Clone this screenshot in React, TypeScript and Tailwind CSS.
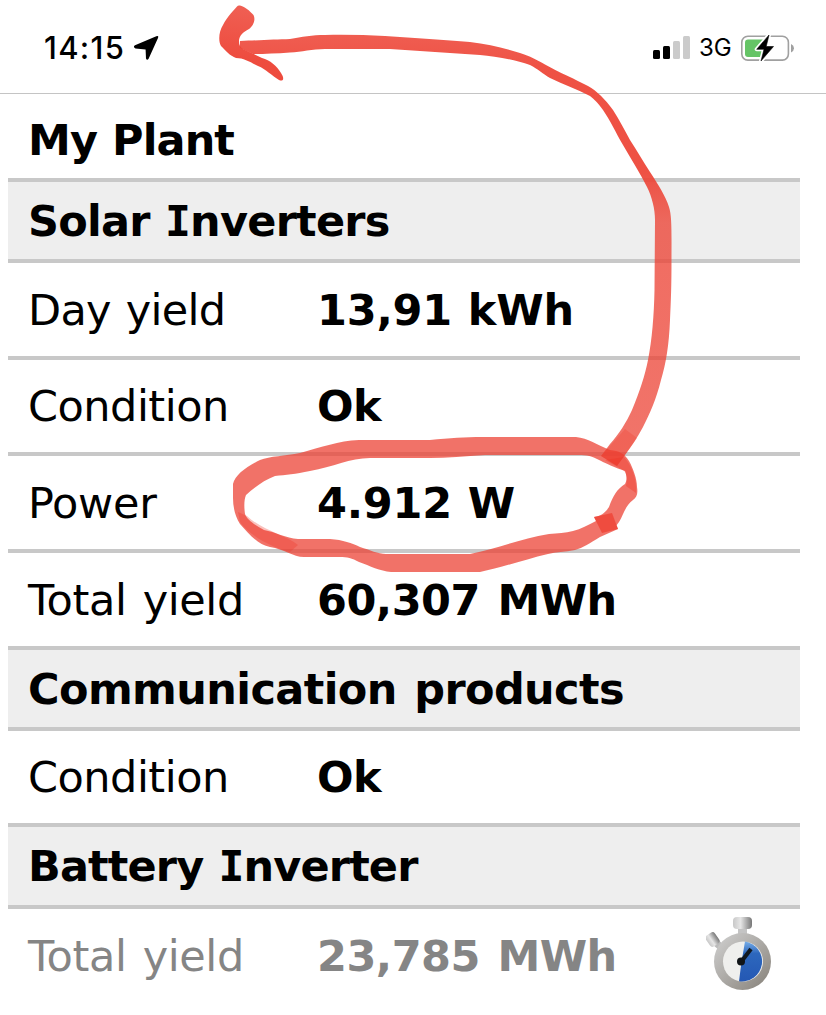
import { Fragment } from 'react';
import { clsx } from 'clsx';

type Row = {
  label: string;
  value?: string;
  heading?: boolean;
  muted?: boolean;
  height: string;
  labelSpacing: string;
  valueSpacing?: string;
};

const rows: Row[] = [
  { label: 'Solar Inverters', heading: true, height: 'h-[81px]', labelSpacing: 'tracking-[-0.75px] [word-spacing:1px]' },
  {
    label: 'Day yield',
    value: '13,91 kWh',
    height: 'h-[97px]',
    labelSpacing: 'tracking-[-0.7px] [word-spacing:2px]',
    valueSpacing: 'tracking-[-0.2px] [word-spacing:1px]',
  },
  { label: 'Condition', value: 'Ok', height: 'h-[96px]', labelSpacing: 'tracking-[-0.5px]', valueSpacing: 'tracking-[-0.5px]' },
  {
    label: 'Power',
    value: '4.912 W',
    height: 'h-[97px]',
    labelSpacing: 'tracking-[-0.3px]',
    valueSpacing: 'tracking-[-0.2px] [word-spacing:1px]',
  },
  {
    label: 'Total yield',
    value: '60,307 MWh',
    height: 'h-[97px]',
    labelSpacing: 'tracking-[-0.4px] [word-spacing:3px]',
    valueSpacing: 'tracking-[-0.5px] [word-spacing:3px]',
  },
  {
    label: 'Communication products',
    heading: true,
    height: 'h-[81px]',
    labelSpacing: 'tracking-[-0.6px] [word-spacing:3px]',
  },
  { label: 'Condition', value: 'Ok', height: 'h-[96px]', labelSpacing: 'tracking-[-0.5px]', valueSpacing: 'tracking-[-0.5px]' },
  { label: 'Battery Inverter', heading: true, height: 'h-[82px]', labelSpacing: 'tracking-[-0.85px] [word-spacing:1px]' },
  {
    label: 'Total yield',
    value: '23,785 MWh',
    muted: true,
    height: 'h-[97px]',
    labelSpacing: 'tracking-[-0.4px] [word-spacing:3px]',
    valueSpacing: 'tracking-[-0.5px] [word-spacing:3px]',
  },
];

// The capital I carries serifs, which only the mono cut has
function Label({ text }: { text: string }) {
  return (
    <>
      {text.split('I').map((part, i) => (
        <Fragment key={i}>
          {i > 0 && <span className="font-['DejaVu_Sans_Mono',monospace]">I</span>}
          {part}
        </Fragment>
      ))}
    </>
  );
}

function StatusBar() {
  return (
    <header className="flex h-[94px] items-start justify-between border-b border-[#c4c4c4] pl-[44px] pr-8 pt-[30px] font-['Inter',sans-serif]">
      <div className="flex items-center">
        <span className="w-[90px] text-[31px] font-medium leading-9 tracking-[1.3px]">14:15</span>
        <svg width="26" height="26" viewBox="0 0 26 26">
          <path d="M1 10.200 22.300 1.200Q25 .3 24 3L14.600 23.800Q13 26 12 23.500L11.600 14.500 1.500 13.500Q-1.500 12 1 10.200Z" />
        </svg>
      </div>
      <div className="flex h-9 items-center">
        <svg width="38" height="24" viewBox="0 0 38 24">
          <rect x="0" y="14" width="7" height="9" rx="1.500" />
          <rect x="10" y="10" width="7" height="13" rx="1.500" />
          <rect x="20" y="5" width="7" height="18" rx="1.500" fill="#cbcbcb" />
          <rect x="30" y="0" width="7" height="23" rx="1.500" fill="#cbcbcb" />
        </svg>
        <span className="ml-2 w-[42px] text-[24px] leading-9">3G</span>
        <svg width="53" height="28" viewBox="0 -1.500 53 28">
          <rect x=".8" y=".8" width="46.600" height="23.800" rx="6" fill="none" stroke="#a0a0a0" strokeWidth="1.600" />
          <path d="M50 8.500Q53 10 53 12.700T50 17Z" fill="#a0a0a0" />
          <path d="M7 4H25V21.500H7Q4 21.500 4 18.500V7Q4 4 7 4Z" fill="#65c466" />
          <path
            d="M28-.5 15.700 13.800H23L20 25.500 32.500 11H25.200Z"
            stroke="#fff"
            strokeWidth="4"
            strokeLinejoin="round"
          />
          <path d="M28-.5 15.700 13.800H23L20 25.500 32.500 11H25.200Z" stroke="#000" strokeWidth=".6" strokeLinejoin="round" />
        </svg>
      </div>
    </header>
  );
}

function Stopwatch() {
  return (
    <svg className="-mt-[3px] ml-auto mr-[28px]" width="66" height="76" viewBox="706 915 66 76">
      <defs>
        <linearGradient id="rim" x1="0" y1="0" x2="1" y2="1">
          <stop offset="0" stopColor="#d2d2d2" />
          <stop offset="1" stopColor="#858078" />
        </linearGradient>
        <linearGradient id="knob" x1="0" y1="0" x2="1" y2="0">
          <stop offset="0" stopColor="#c8c8c8" />
          <stop offset=".4" stopColor="#e6e6e6" />
          <stop offset="1" stopColor="#777" />
        </linearGradient>
        <linearGradient id="dial" x1="0" y1="0" x2="0" y2="1">
          <stop offset="0" stopColor="#77aee8" />
          <stop offset=".3" stopColor="#2d67bd" />
          <stop offset="1" stopColor="#2458b4" />
        </linearGradient>
      </defs>
      <rect x="738" y="926" width="9" height="9" fill="#c4c4c4" />
      <rect x="733" y="916" width="19" height="12" rx="4" fill="url(#knob)" />
      <path d="m714 940 8 7" stroke="#bbb" strokeWidth="7" />
      <rect x="707" y="932" width="11" height="13" rx="3" fill="url(#knob)" transform="rotate(-35 712.500 938.500)" />
      <circle cx="742.500" cy="960.500" r="28.500" fill="url(#rim)" />
      <circle cx="743" cy="960.500" r="20" fill="#efefed" />
      <path d="M745 940.500A20 20 0 0 1 739 980.200L741.500 961Z" fill="url(#dial)" />
      <path d="m741 961 10-13" stroke="#101820" strokeWidth="4" />
      <circle cx="741" cy="960.500" r="4" fill="#101418" />
    </svg>
  );
}

function Annotation() {
  return (
    <svg className="pointer-events-none absolute inset-0" width="826" height="1015" viewBox="0 0 826 1015">
      <defs>
        <linearGradient id="shaft" gradientUnits="userSpaceOnUse" x1="0" y1="30" x2="0" y2="450">
          <stop offset="0" stopColor="#ed4436" stopOpacity=".86" />
          <stop offset=".1" stopColor="#ed4436" stopOpacity=".93" />
          <stop offset=".34" stopColor="#ed4436" stopOpacity=".93" />
          <stop offset=".46" stopColor="#ec4335" stopOpacity=".78" />
          <stop offset="1" stopColor="#ec4335" stopOpacity=".74" />
        </linearGradient>
        <linearGradient id="head" gradientUnits="userSpaceOnUse" x1="250" y1="10" x2="245" y2="60">
          <stop offset="0" stopColor="#ed4436" stopOpacity=".86" />
          <stop offset="1" stopColor="#ed4436" stopOpacity=".96" />
        </linearGradient>
      </defs>
      <path
        fill="url(#shaft)"
        d="M240 41C262 40 276 39.500 290 39C302 37 312 35 325 35C345 34.500 365 35 385 36C415 38 445 40 470 42C488 44 504 48 520 53C530 56 537 60 545 64.500C560 73 575 79 588 86C597 91 605 99 613 110C620 121 625 131 630 140C637 151 643 161 650 172C658 184 666 197 669 207C672 216 671.500 232 671.500 260C671.500 285 671 300 670 320C669 345 666 363 661 380C656 400 650 413 643 427C637 438 631 447 625 455L617 466L601 456L610 444C619 434 626 423 632 410C640 391 645 375 648 360C652 340 654 315 654.500 290L655 220C655 209 652 197 647 187C640 173 631 159 623 145C616 133 610 120 603 110C598 103 594 99 590 96C577 89 564 85 550 78C543 74 538 69 530 65C515 60 495 56 480 55C450 53 420 51 390 49H325C312 49 302 52 290 52.500C276 53.500 265 54 253 54L240 48Z"
      />
      <path
        fill="url(#head)"
        d="M240 5.500C244 6 250 11 253.500 15C256 20 253 26 249 29C243 32 239 36 239 41C239 45 240 47 243 49C249 52 254 54 262 58C270 60 277 66 281 73C285 79 283 82 279 80C272 76 266 69 258 66C250 62 244 58 236 58C230 56 225 50 221 46C218 41 219 31 223 25C227 17 234 10 237 6.500Q238 5 240 5.500Z"
      />
      <path
        fill="#ec4335"
        fillOpacity=".75"
        d="M594 517L612 513L618 529L600 537C590 543 583 548 575 550C565 552 556 552 548 554C523 560 500 568 480 572H391C380 571 370 566 359 562C352 558 347 557 340 557H304C293 557 284 549 270 547C258 545 248 533 240 524C235 516 233 507 233 498V484C235 475 246 467 260 460C270 456 285 456 300 453C322 447 338 441 359 440H430C450 438 465 437 482 437H576C588 438 597 445 610 450C619 451 624 453 629 461C633 468 637 479 637 487C638 494 637 497 633 500C625 506 624 514 619 522L616 526L594 517C601 516 605 513 609 507C613 496 617 489 625 484C627 480 627 477 625 471C616 468 605 463 597 459C590 455 584 455 576 455H485C465 456 447 458 430 458H370C350 458 333 467 310 471C295 474 286 475 275 476C264 480 254 488 246 495C244 500 244 507 245 514C247 520 255 525 264 530C275 532 286 538 298 539H330C343 540 352 543 360 547C370 550 378 554 386 554H470C496 549 520 539 549 534C558 533 565 533 573 531C581 529 588 525 596 521Z"
      />
      {/* places where the pen went over its own line */}
      <path fill="#ee3325" fillOpacity=".6" d="M594 517L612 513L618 529L602 533Z" />
      <path fill="#ee3325" fillOpacity=".25" d="M625 429L637 438L617 466L601 456Z" />
      <path fill="#ee3325" fillOpacity=".35" d="M605 460L624 457C632 466 637 479 636 493L626 486C628 477 626 472 623 470Z" />
      <path fill="#ee3325" fillOpacity=".3" d="M238 512L247 516C262 530 285 535 298 545L290 552C270 547 248 534 240 522Z" />
    </svg>
  );
}

export default function App() {
  return (
    <div className="relative h-[1015px] w-[826px] overflow-hidden bg-white text-black">
      <StatusBar />
      <main className="ml-2 w-[792px] font-['DejaVu_Sans',sans-serif] text-[43px] leading-[50px]">
        <h1 className="flex h-[84px] items-center pl-5 pt-2 font-bold">
          <span className="tracking-[-0.9px] [word-spacing:1px]">My Plant</span>
        </h1>
        {rows.map((row, i) => (
          <div
            key={i}
            className={clsx(
              'flex items-center border-t-4 border-[#c8c8c8] pl-5',
              row.height,
              row.heading && 'bg-[#eee] font-bold',
              row.muted && 'text-[#858585]'
            )}
          >
            <span className={clsx('whitespace-nowrap', row.labelSpacing, !row.heading && 'w-[289px]')}>
              <Label text={row.label} />
            </span>
            {row.value && <span className={clsx('whitespace-nowrap font-bold', row.valueSpacing)}>{row.value}</span>}
            {row.muted && <Stopwatch />}
          </div>
        ))}
      </main>
      <Annotation />
    </div>
  );
}
